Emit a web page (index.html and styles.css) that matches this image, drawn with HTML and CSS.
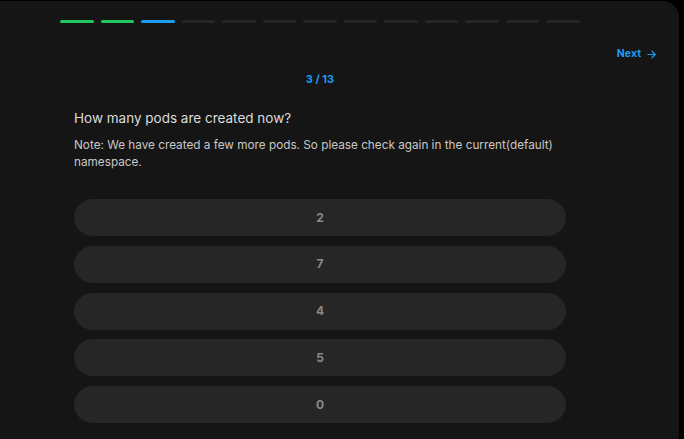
FILE: index.html
```html
<!DOCTYPE html>
<html>
<head>
<meta charset="utf-8">
<link rel="stylesheet" href="styles.css">
</head>
<body>
<div class="card">
  <div class="progress">
    <span class="seg done"></span><span class="seg done"></span><span class="seg current"></span><span class="seg"></span><span class="seg"></span><span class="seg"></span><span class="seg"></span><span class="seg"></span><span class="seg"></span><span class="seg"></span><span class="seg"></span><span class="seg"></span><span class="seg"></span>
  </div>
  <div class="nav">
    <a class="next">Next
      <svg width="11" height="11" viewBox="0 0 24 24" fill="none" stroke="currentColor" stroke-width="2.6" stroke-linecap="round" stroke-linejoin="round"><path d="M4 12h15"/><path d="M13 5l7 7-7 7"/></svg>
    </a>
  </div>
  <div class="counter">3 / 13</div>
  <div class="content">
    <h2 class="question">How many pods are created now?</h2>
    <p class="note">Note: We have created a few more pods. So please check again in the current(default) namespace.</p>
    <div class="options">
      <button class="option">2</button>
      <button class="option">7</button>
      <button class="option">4</button>
      <button class="option">5</button>
      <button class="option">0</button>
    </div>
  </div>
</div>
</body>
</html>
```

FILE: styles.css
```css
html, body {
  margin: 0;
  padding: 0;
  background: #000;
  height: 100%;
}
body {
  font-family: Inter, "Noto Sans", sans-serif;
  overflow: hidden;
}
.card {
  margin-top: 1px;
  width: 679px;
  height: 438px;
  background: #151515;
  border-top-right-radius: 16px;
  box-sizing: border-box;
  padding-top: 19px;
}
.progress {
  margin-left: 60px;
  width: 520px;
  display: flex;
  gap: 7px;
}
.seg {
  flex: 1;
  height: 3px;
  border-radius: 2px;
  background: #262626;
}
.seg.done { background: #22c55e; }
.seg.current { background: #1d9bf0; }
.nav {
  display: flex;
  justify-content: flex-end;
  padding-right: 22px;
  margin-top: 24px;
  height: 14px;
}
.next {
  display: flex;
  align-items: center;
  gap: 5px;
  color: #1d9bf0;
  font-size: 10.5px;
  font-weight: 700;
  line-height: 14px;
}
.counter {
  margin-left: 60px;
  width: 520px;
  text-align: center;
  margin-top: 11px;
  color: #1d9bf0;
  font-size: 11px;
  font-weight: 700;
  line-height: 14px;
}
.content {
  margin-left: 74px;
  width: 492px;
}
.question {
  margin: 22px 0 0;
  font-size: 13.5px;
  font-weight: 400;
  line-height: 20px;
  color: #dcdcdc;
}
.note {
  margin: 9px 0 0;
  font-size: 11.75px;
  line-height: 17px;
  color: #c8c8c8;
}
.options {
  margin-top: 28px;
  display: flex;
  flex-direction: column;
  gap: 9.75px;
}
.option {
  height: 37px;
  border: none;
  border-radius: 19px;
  background: #262626;
  color: #8a8a8a;
  font-family: inherit;
  font-size: 12px;
  font-weight: 700;
  padding: 0 0 1px;
}
```
